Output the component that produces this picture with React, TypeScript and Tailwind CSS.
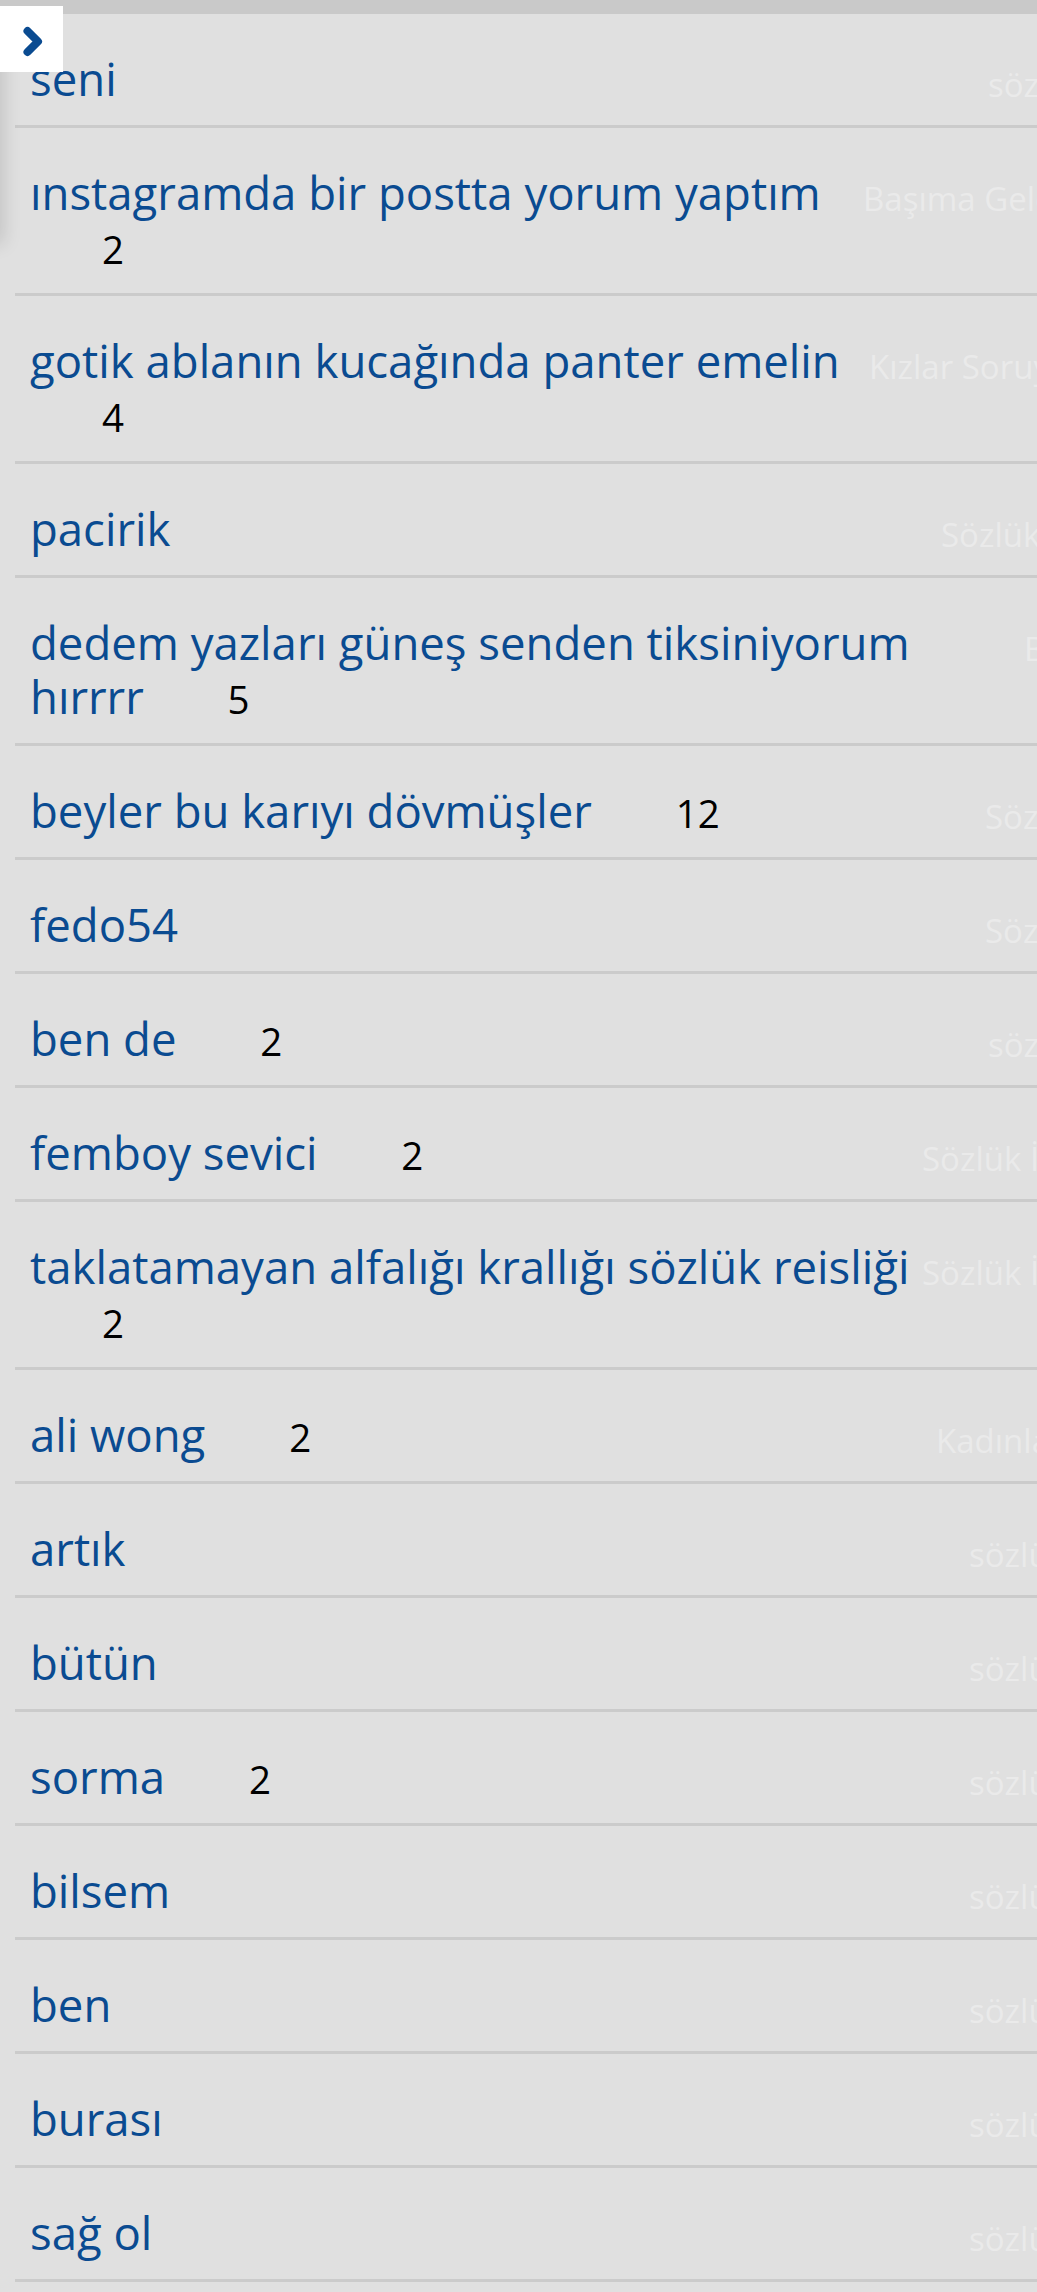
import React from "react";

type Topic = {
  title: string;
  count?: number;
  channel: string;
  channelW: string;
};

const topics: Topic[] = [
  { title: "seni", channel: "sözlük", channelW: "w-[49px]" },
  { title: "ınstagramda bir postta yorum yaptım", count: 2, channel: "Başıma Gelenler", channelW: "w-[174px]" },
  { title: "gotik ablanın kucağında panter emelin", count: 4, channel: "Kızlar Soruyor", channelW: "w-[168px]" },
  { title: "pacirik", channel: "Sözlük Dışı", channelW: "w-[96px]" },
  { title: "dedem yazları güneş senden tiksiniyorum hırrrr", count: 5, channel: "Bilim", channelW: "w-[13px]" },
  { title: "beyler bu karıyı dövmüşler", count: 12, channel: "Sözlük", channelW: "w-[52px]" },
  { title: "fedo54", channel: "Sözlük", channelW: "w-[52px]" },
  { title: "ben de", count: 2, channel: "sözlük", channelW: "w-[49px]" },
  { title: "femboy sevici", count: 2, channel: "Sözlük İçi", channelW: "w-[115px]" },
  { title: "taklatamayan alfalığı krallığı sözlük reisliği", count: 2, channel: "Sözlük İçi", channelW: "w-[115px]" },
  { title: "ali wong", count: 2, channel: "Kadınlar", channelW: "w-[101px]" },
  { title: "artık", channel: "sözlük", channelW: "w-[68px]" },
  { title: "bütün", channel: "sözlük", channelW: "w-[68px]" },
  { title: "sorma", count: 2, channel: "sözlük", channelW: "w-[68px]" },
  { title: "bilsem", channel: "sözlük", channelW: "w-[68px]" },
  { title: "ben", channel: "sözlük", channelW: "w-[68px]" },
  { title: "burası", channel: "sözlük", channelW: "w-[68px]" },
  { title: "sağ ol", channel: "sözlük", channelW: "w-[68px]" },
];

const TopicRow = ({ topic }: { topic: Topic }) => {
  return (
    <li className="ml-[15px] flex items-start border-b-[3px] border-[#cbcbcb] pl-[15px] pt-[37px] pb-[20px]">
      <div className="min-w-0 flex-1 text-[45.5px] leading-[54px] text-[#0a4b91]">
        <a href="#">{topic.title}</a>{" "}
        {topic.count && (
          <span className="ml-[72px] text-[38.5px] leading-[40px] text-black">
            {topic.count}
          </span>
        )}
      </div>
      <div
        className={`${topic.channelW} mt-[14px] shrink-0 overflow-hidden whitespace-nowrap text-[33px] leading-[40px] text-[#eaeaea]`}
      >
        {topic.channel}
      </div>
    </li>
  );
};

export default function App() {
  return (
    <div className="relative min-h-[2292px] overflow-hidden bg-[#e0e0e0] font-['Open_Sans',sans-serif]">
      <div className="h-[14px] bg-[#c9c9c9]" />

      {/* shadow of the hidden side menu */}
      <div className="absolute -left-[22px] top-[40px] h-[200px] w-[22px] shadow-[0_0_18px_4px_rgba(0,0,0,0.13)]" />

      <button className="absolute left-0 top-[6px] flex h-[66px] w-[63px] items-center justify-center bg-white">
        <svg width="63" height="66" viewBox="0 0 63 66">
          <polyline
            points="27.5,25 38,35.5 27.5,46"
            fill="none"
            stroke="#0a4b91"
            strokeWidth="8"
            strokeLinecap="round"
            strokeLinejoin="round"
          />
        </svg>
      </button>

      <ul>
        {topics.map((t, i) => (
          <TopicRow key={i} topic={t} />
        ))}
      </ul>
    </div>
  );
}
